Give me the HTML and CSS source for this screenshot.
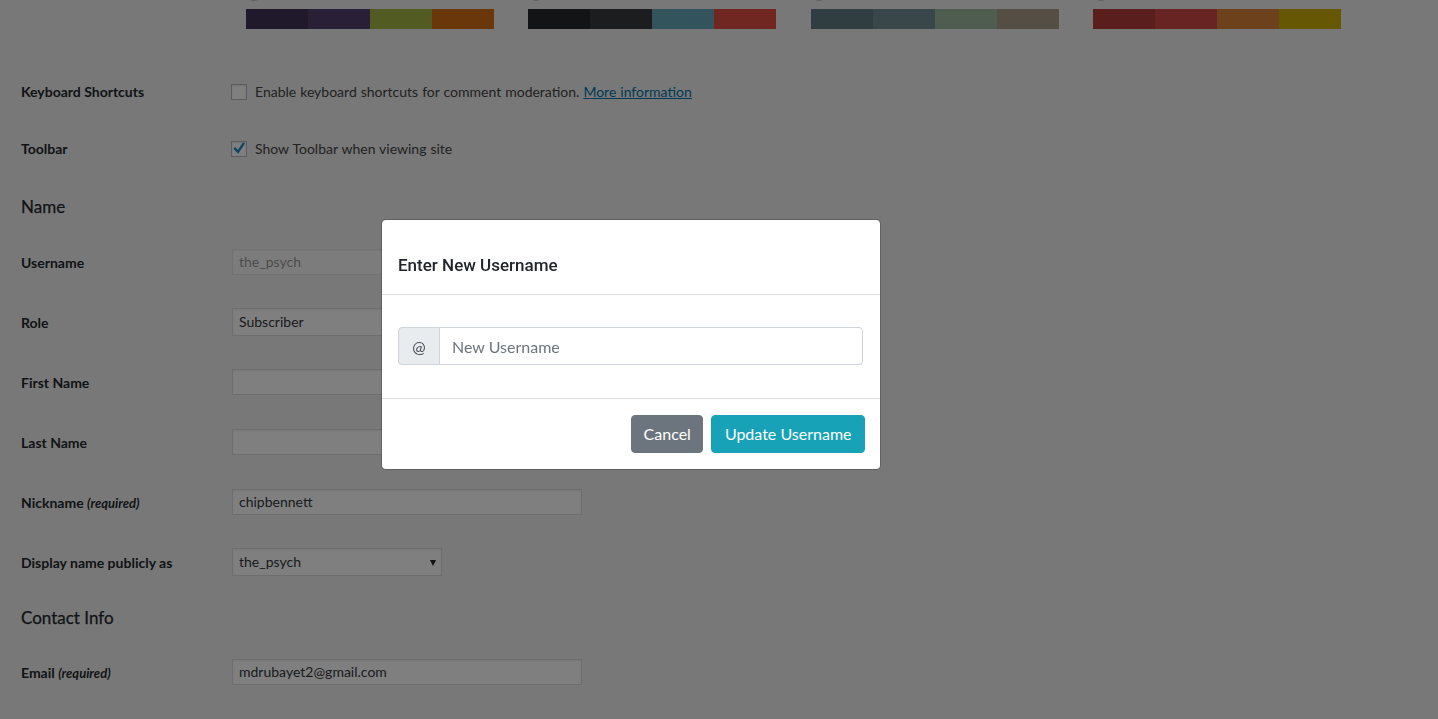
FILE: index.html
```html
<!DOCTYPE html>
<html lang="en">
<head>
<meta charset="utf-8">
<title>Profile</title>
<link rel="stylesheet" href="styles.css">
</head>
<body class="modal-open">
<div class="page">
  <div class="form-row palette-row">
    <div class="label"></div>
    <div class="color-options">
      <div class="color-option">
        <div class="option-label"><span class="radio"></span></div>
        <div class="palette"><span class="sw c-ecto1"></span><span class="sw c-ecto2"></span><span class="sw c-ecto3"></span><span class="sw c-ecto4"></span></div>
      </div>
      <div class="color-option">
        <div class="option-label"><span class="radio"></span></div>
        <div class="palette"><span class="sw c-mid1"></span><span class="sw c-mid2"></span><span class="sw c-mid3"></span><span class="sw c-mid4"></span></div>
      </div>
      <div class="color-option">
        <div class="option-label"><span class="radio"></span></div>
        <div class="palette"><span class="sw c-oce1"></span><span class="sw c-oce2"></span><span class="sw c-oce3"></span><span class="sw c-oce4"></span></div>
      </div>
      <div class="color-option">
        <div class="option-label"><span class="radio"></span></div>
        <div class="palette"><span class="sw c-sun1"></span><span class="sw c-sun2"></span><span class="sw c-sun3"></span><span class="sw c-sun4"></span></div>
      </div>
    </div>
  </div>

  <div class="form-row row-kb">
    <div class="label">Keyboard Shortcuts</div>
    <div class="field check-field">
      <span class="checkbox"></span>
      <span class="desc">Enable keyboard shortcuts for comment moderation. <a class="link" href="#">More information</a></span>
    </div>
  </div>

  <div class="form-row row-toolbar">
    <div class="label">Toolbar</div>
    <div class="field check-field">
      <span class="checkbox checked"><svg viewBox="0 0 16 16" width="16" height="16"><path d="M3.3 6.9 L7 10.8 L13 1.8" fill="none" stroke="#1e8cbe" stroke-width="2.4" stroke-linejoin="miter"/></svg></span>
      <span class="desc">Show Toolbar when viewing site</span>
    </div>
  </div>

  <h2 class="section-title title-name">Name</h2>

  <div class="form-row">
    <div class="label">Username</div>
    <div class="field"><div class="input disabled">the_psych</div></div>
  </div>
  <div class="form-row">
    <div class="label">Role</div>
    <div class="field"><div class="select role-select">Subscriber</div></div>
  </div>
  <div class="form-row">
    <div class="label">First Name</div>
    <div class="field"><div class="input"></div></div>
  </div>
  <div class="form-row">
    <div class="label">Last Name</div>
    <div class="field"><div class="input"></div></div>
  </div>
  <div class="form-row">
    <div class="label">Nickname <em class="req">(required)</em></div>
    <div class="field"><div class="input">chipbennett</div></div>
  </div>
  <div class="form-row">
    <div class="label">Display name publicly as</div>
    <div class="field"><div class="select display-select">the_psych<span class="caret"></span></div></div>
  </div>

  <h2 class="section-title title-contact">Contact Info</h2>

  <div class="form-row">
    <div class="label">Email <em class="req">(required)</em></div>
    <div class="field"><div class="input">mdrubayet2@gmail.com</div></div>
  </div>
</div>

<div class="backdrop"></div>

<div class="modal">
  <div class="modal-header">
    <h5 class="modal-title">Enter New Username</h5>
  </div>
  <div class="modal-body">
    <div class="input-group">
      <span class="addon">@</span>
      <input class="form-control" type="text" placeholder="New Username">
    </div>
  </div>
  <div class="modal-footer">
    <button class="btn btn-secondary" type="button">Cancel</button>
    <button class="btn btn-info" type="button">Update Username</button>
  </div>
</div>
</body>
</html>
```
FILE: styles.css
```css
html, body {
  margin: 0;
  padding: 0;
}
body {
  background: #f1f1f1;
  color: #23282d;
  font-family: Lato, "Segoe UI", Roboto, sans-serif;
  font-size: 14px;
}
body.modal-open {
  overflow: hidden;
  height: 719px;
}
.page {
  padding-left: 21px;
}
.form-row {
  display: grid;
  grid-template-columns: 211px 1fr;
  align-items: center;
  height: 60px;
}
.label {
  font-weight: 700;
  line-height: 18px;
}
.req {
  font-weight: 700;
  font-style: italic;
  font-size: 13px;
}

/* colour scheme palettes */
.palette-row {
  height: auto;
  align-items: start;
  margin-bottom: 33px;
}
.color-options {
  display: flex;
}
.color-option {
  width: 282.33px;
  padding-left: 14px;
  box-sizing: border-box;
  flex: none;
}
.option-label {
  display: flex;
  align-items: center;
  height: 20px;
  margin-top: -17px;
  margin-bottom: 6px;
}
.radio {
  width: 16px;
  height: 16px;
  border-radius: 50%;
  border: 1px solid #b4b9be;
  background: #fff;
  box-sizing: border-box;
}
.palette {
  display: flex;
  width: 248px;
  height: 20px;
}
.sw { flex: 1; }
.c-ecto1 { background: #413256; }
.c-ecto2 { background: #523f6d; }
.c-ecto3 { background: #a3b745; }
.c-ecto4 { background: #d46f15; }
.c-mid1 { background: #25282b; }
.c-mid2 { background: #363b3f; }
.c-mid3 { background: #69a8bb; }
.c-mid4 { background: #e14d43; }
.c-oce1 { background: #627c83; }
.c-oce2 { background: #738e96; }
.c-oce3 { background: #9ebaa0; }
.c-oce4 { background: #aa9d88; }
.c-sun1 { background: #b43c38; }
.c-sun2 { background: #cf4944; }
.c-sun3 { background: #dd823b; }
.c-sun4 { background: #ccaf0b; }

/* checkbox rows */
.row-toolbar { height: 54px; }
.check-field {
  display: flex;
  align-items: center;
  margin-left: -1px;
}
.checkbox {
  width: 16px;
  height: 16px;
  border: 1px solid #b4b9be;
  background: #fff;
  box-sizing: border-box;
  box-shadow: inset 0 1px 2px rgba(0,0,0,.1);
  margin-right: 8px;
  flex: none;
  position: relative;
}
.checkbox svg {
  position: absolute;
  left: -1px;
  top: -1px;
}
.desc {
  color: #444;
  line-height: 20px;
  word-spacing: 0.4px;
}
.link {
  color: #0073aa;
  text-decoration: underline;
}

/* section headings */
.section-title {
  margin: 0;
  font-size: 17px;
  font-weight: 400;
  line-height: 24px;
  color: #23282d;
  -webkit-text-stroke: 0.25px #23282d;
}
.title-name {
  height: 57px;
  padding-top: 19px;
  box-sizing: border-box;
}
.title-contact {
  height: 50px;
  padding-top: 13px;
  box-sizing: border-box;
}

/* inputs */
.input {
  width: 350px;
  height: 26px;
  box-sizing: border-box;
  border: 1px solid #ddd;
  background: #fff;
  box-shadow: inset 0 1px 2px rgba(0,0,0,.07);
  padding: 0 6px;
  line-height: 24px;
  color: #32373c;
  margin-top: -2px;
}
.input.disabled {
  background: rgba(255,255,255,.5);
  border-color: rgba(222,222,222,.75);
  box-shadow: inset 0 1px 2px rgba(0,0,0,.04);
  color: rgba(51,51,51,.5);
}
.select {
  height: 28px;
  box-sizing: border-box;
  border: 1px solid #ddd;
  background: #fff;
  box-shadow: inset 0 1px 2px rgba(0,0,0,.07);
  padding: 0 6px;
  line-height: 26px;
  color: #32373c;
  position: relative;
  margin-top: -2px;
}
.role-select { width: 200px; }
.display-select { width: 210px; }
.caret {
  position: absolute;
  right: 5px;
  top: 11px;
  width: 0;
  height: 0;
  border-left: 3.5px solid transparent;
  border-right: 3.5px solid transparent;
  border-top: 6px solid #222;
}

/* overlay */
.backdrop {
  position: fixed;
  inset: 0;
  background: rgba(0,0,0,.5);
}

/* modal */
.modal {
  position: absolute;
  left: 381px;
  top: 219px;
  width: 500px;
  box-sizing: border-box;
  background: #fff;
  border: 1px solid rgba(0,0,0,.2);
  border-radius: 4.8px;
  color: #212529;
  font-size: 16px;
  background-clip: padding-box;
}
.modal-header {
  padding: 32px 16px 16px;
  border-bottom: 1px solid #dee2e6;
}
.modal-title {
  margin: 0;
  font-family: Roboto, Lato, sans-serif;
  font-size: 17px;
  font-weight: 500;
  line-height: 26px;
  color: #212529;
}
.modal-body {
  padding: 32px 17px 33px 16px;
}
.input-group {
  display: flex;
  height: 38px;
}
.addon {
  width: 42px;
  box-sizing: border-box;
  display: flex;
  align-items: center;
  justify-content: center;
  background: #e9ecef;
  border: 1px solid #ced4da;
  border-radius: 4px 0 0 4px;
  color: #495057;
  font-size: 16px;
}
.form-control {
  flex: 1;
  min-width: 0;
  box-sizing: border-box;
  height: 38px;
  margin: 0;
  margin-left: -1px;
  border: 1px solid #ced4da;
  border-radius: 0 4px 4px 0;
  padding: 6px 12px;
  font-family: inherit;
  font-size: 16px;
  color: #495057;
  background: #fff;
  outline: none;
}
.form-control::placeholder {
  color: #6c757d;
  opacity: 1;
}
.modal-footer {
  display: flex;
  justify-content: flex-end;
  gap: 8px;
  padding: 16px 15px 16px 16px;
  border-top: 1px solid #dee2e6;
}
.btn {
  height: 38px;
  border: 1px solid transparent;
  border-radius: 4px;
  padding: 0 12px;
  font-family: inherit;
  font-size: 16px;
  line-height: 36px;
  color: #fff;
  cursor: pointer;
}
.btn-secondary {
  background: #6c757d;
  border-color: #6c757d;
  padding: 0 11.5px;
}
.btn-info {
  background: #17a2b8;
  border-color: #17a2b8;
  padding: 0 12.5px;
}
```
